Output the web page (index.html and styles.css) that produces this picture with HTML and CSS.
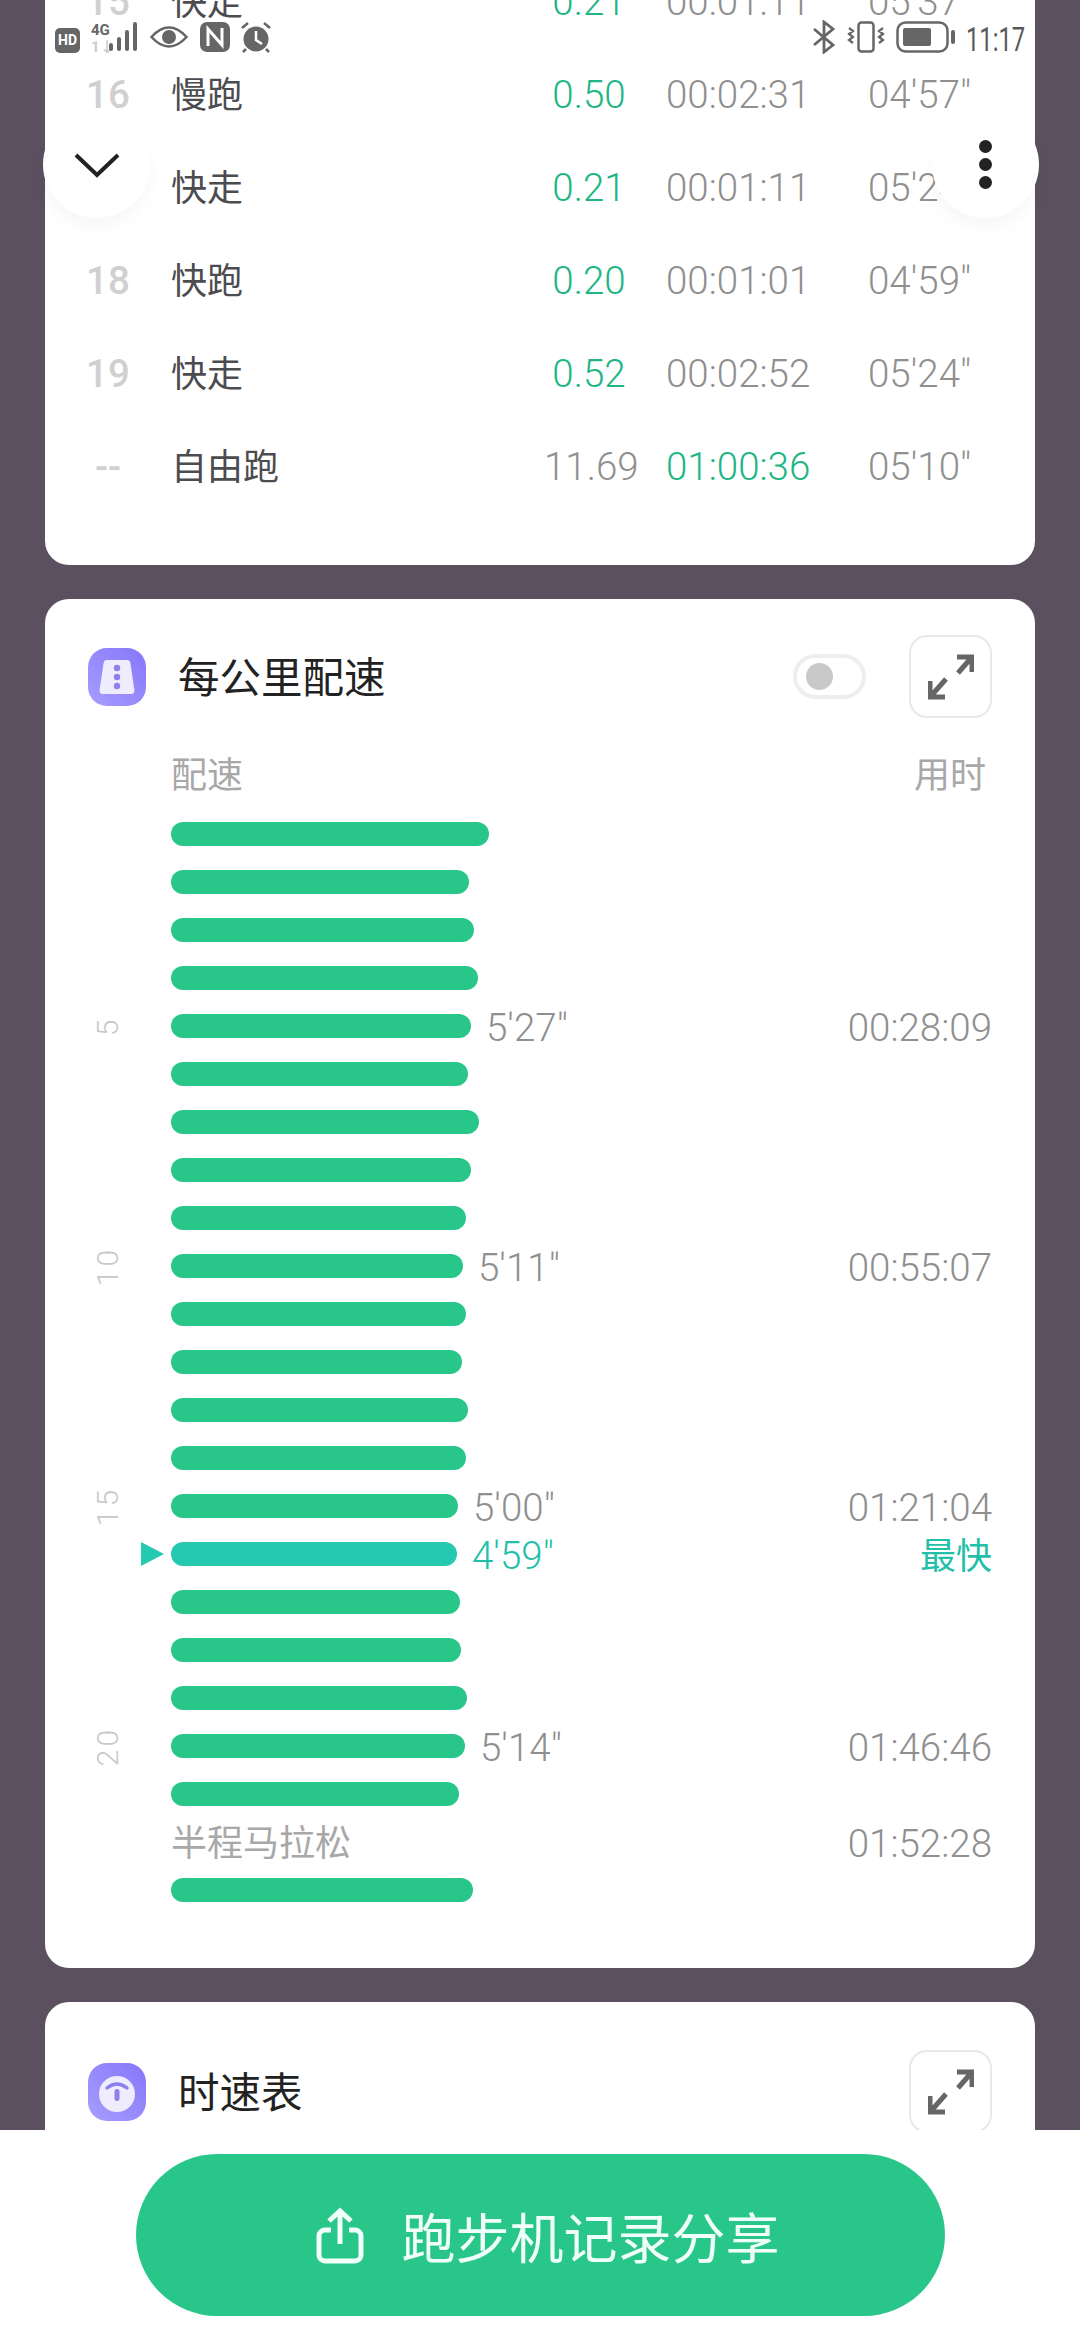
FILE: index.html
```html
<!DOCTYPE html>
<html lang="zh-CN">

<head>
    <meta charset="UTF-8">
    <meta name="viewport" content="width=device-width, initial-scale=1.0">
    <title>跑步机记录</title>

    <link rel="stylesheet" href="styles.css">
</head>

<body>
    <div class="page">
        <section class="card card-laps">
            <div class="lap"><span class="lap-no">15</span><span class="lap-name">快走</span><span class="lap-dist green">0.21</span><span class="lap-time">00:01:11</span><span class="lap-pace">05'37"</span></div>
            <div class="lap"><span class="lap-no">16</span><span class="lap-name">慢跑</span><span class="lap-dist green">0.50</span><span class="lap-time">00:02:31</span><span class="lap-pace">04'57"</span></div>
            <div class="lap"><span class="lap-no">17</span><span class="lap-name">快走</span><span class="lap-dist green">0.21</span><span class="lap-time">00:01:11</span><span class="lap-pace">05'24"</span></div>
            <div class="lap"><span class="lap-no">18</span><span class="lap-name">快跑</span><span class="lap-dist green">0.20</span><span class="lap-time">00:01:01</span><span class="lap-pace">04'59"</span></div>
            <div class="lap"><span class="lap-no">19</span><span class="lap-name">快走</span><span class="lap-dist green">0.52</span><span class="lap-time">00:02:52</span><span class="lap-pace">05'24"</span></div>
            <div class="lap"><span class="lap-no">--</span><span class="lap-name">自由跑</span><span class="lap-dist">11.69</span><span class="lap-time green">01:00:36</span><span class="lap-pace">05'10"</span></div>
        </section>

        <section class="card card-pace">
            <div class="card-head">
                <svg class="head-icon" viewBox="0 0 58 58">
                    <defs>
                        <linearGradient id="purple1" x1="0" y1="1" x2="1" y2="0">
                            <stop offset="0" stop-color="#a79dff" />
                            <stop offset="1" stop-color="#8577f8" />
                        </linearGradient>
                    </defs>
                    <rect width="58" height="58" rx="19" fill="url(#purple1)" />
                    <path d="M19 12h20q3 0 3.400 3l4 27q.4 4-3.400 4H15q-3.800 0-3.400-4l4-27q.4-3 3.400-3z" fill="#efecfd" />
                    <circle cx="29" cy="20" r="3.200" fill="#8d80ee" />
                    <circle cx="29" cy="29" r="3.200" fill="#8d80ee" />
                    <circle cx="29" cy="38" r="3.200" fill="#8d80ee" />
                </svg>
                <h2 class="card-title">每公里配速</h2>
                <div class="toggle"><span class="toggle-knob"></span></div>
                <button class="expand" type="button">
                    <svg viewBox="0 0 46 46" width="46" height="46">
                        <path d="M29 3h15v15M44 3L30 19M2 27v16h15M3 42l15-17" />
                    </svg>
                </button>
            </div>

            <div class="pace-labels"><span>配速</span><span>用时</span></div>

            <div class="pace-list">
                <div class="km"><span class="km-side"></span><span class="km-main"><i class="bar" style="width:318px"></i></span></div>
                <div class="km"><span class="km-side"></span><span class="km-main"><i class="bar" style="width:298px"></i></span></div>
                <div class="km"><span class="km-side"></span><span class="km-main"><i class="bar" style="width:303px"></i></span></div>
                <div class="km"><span class="km-side"></span><span class="km-main"><i class="bar" style="width:307px"></i></span></div>
                <div class="km"><span class="km-side"><b class="km-no">5</b></span><span class="km-main"><i class="bar" style="width:300px"></i><span class="km-pace">5'27"</span></span><span class="km-time">00:28:09</span></div>
                <div class="km"><span class="km-side"></span><span class="km-main"><i class="bar" style="width:297px"></i></span></div>
                <div class="km"><span class="km-side"></span><span class="km-main"><i class="bar" style="width:308px"></i></span></div>
                <div class="km"><span class="km-side"></span><span class="km-main"><i class="bar" style="width:300px"></i></span></div>
                <div class="km"><span class="km-side"></span><span class="km-main"><i class="bar" style="width:295px"></i></span></div>
                <div class="km"><span class="km-side"><b class="km-no">10</b></span><span class="km-main"><i class="bar" style="width:292px"></i><span class="km-pace">5'11"</span></span><span class="km-time">00:55:07</span></div>
                <div class="km"><span class="km-side"></span><span class="km-main"><i class="bar" style="width:295px"></i></span></div>
                <div class="km"><span class="km-side"></span><span class="km-main"><i class="bar" style="width:291px"></i></span></div>
                <div class="km"><span class="km-side"></span><span class="km-main"><i class="bar" style="width:297px"></i></span></div>
                <div class="km"><span class="km-side"></span><span class="km-main"><i class="bar" style="width:295px"></i></span></div>
                <div class="km"><span class="km-side"><b class="km-no">15</b></span><span class="km-main"><i class="bar" style="width:287px"></i><span class="km-pace">5'00"</span></span><span class="km-time">01:21:04</span></div>
                <div class="km km-fast"><span class="km-side"><i class="km-arrow"></i></span><span class="km-main"><i class="bar" style="width:286px"></i><span class="km-pace">4'59"</span></span><span class="km-time">最快</span></div>
                <div class="km"><span class="km-side"></span><span class="km-main"><i class="bar" style="width:289px"></i></span></div>
                <div class="km"><span class="km-side"></span><span class="km-main"><i class="bar" style="width:290px"></i></span></div>
                <div class="km"><span class="km-side"></span><span class="km-main"><i class="bar" style="width:296px"></i></span></div>
                <div class="km"><span class="km-side"><b class="km-no">20</b></span><span class="km-main"><i class="bar" style="width:294px"></i><span class="km-pace">5'14"</span></span><span class="km-time">01:46:46</span></div>
                <div class="km"><span class="km-side"></span><span class="km-main"><i class="bar" style="width:288px"></i></span></div>
                <div class="km"><span class="km-side"></span><span class="km-main km-half">半程马拉松</span><span class="km-time">01:52:28</span></div>
                <div class="km"><span class="km-side"></span><span class="km-main"><i class="bar" style="width:302px"></i></span></div>
            </div>
        </section>

        <section class="card card-speed">
            <div class="card-head">
                <svg class="head-icon" viewBox="0 0 58 58">
                    <defs>
                        <linearGradient id="purple2" x1="0" y1="1" x2="1" y2="0">
                            <stop offset="0" stop-color="#a79dff" />
                            <stop offset="1" stop-color="#8577f8" />
                        </linearGradient>
                    </defs>
                    <rect width="58" height="58" rx="19" fill="url(#purple2)" />
                    <circle cx="29" cy="31" r="18" fill="#efecfd" />
                    <path d="M19 25q10-8 20 0" fill="none" stroke="#8d80ee" stroke-width="3.500" stroke-linecap="round" />
                    <rect x="26.500" y="26" width="5" height="12" rx="2.500" fill="#8d80ee" />
                </svg>
                <h2 class="card-title">时速表</h2>
                <button class="expand" type="button">
                    <svg viewBox="0 0 46 46" width="46" height="46">
                        <path d="M29 3h15v15M44 3L30 19M2 27v16h15M3 42l15-17" />
                    </svg>
                </button>
            </div>
        </section>
    </div>

    <div class="statusbar">
        <div class="status-left">
            <span class="hd">HD</span>
            <svg width="50" height="32" viewBox="0 0 50 32">
                <text class="net" x="1" y="14">4G</text>
                <text class="net net-low" x="1" y="31">1↓</text>
                <rect x="19" y="22" width="4" height="8" rx="2" fill="#666" />
                <rect x="27" y="16" width="4" height="14" rx="2" fill="#666" />
                <rect x="35" y="9" width="4" height="21" rx="2" fill="#666" />
                <rect x="43" y="1" width="4" height="29" rx="2" fill="#666" />
            </svg>
            <svg width="38" height="22" viewBox="0 0 38 22">
                <path d="M1.500 11Q10 1.500 19 1.500T36.500 11Q28 20.500 19 20.500T1.500 11z" fill="none" stroke="#666" stroke-width="2.500" />
                <circle cx="19" cy="11" r="7" fill="#666" />
            </svg>
            <svg class="nfc" width="30" height="30" viewBox="0 0 30 30">
                <rect width="30" height="30" rx="7" fill="#666" />
                <path d="M8 24V7l14 16V6" fill="none" stroke="#fff" stroke-width="3" />
            </svg>
            <svg width="32" height="32" viewBox="0 0 32 32">
                <circle cx="16" cy="18" r="12.500" fill="#666" />
                <path d="M16 10v9l6 4" fill="none" stroke="#fff" stroke-width="2.500" />
                <path d="M2 7l6-5M30 7l-6-5M6 28l-3 3M26 28l3 3" fill="none" stroke="#666" stroke-width="2.500" />
            </svg>
        </div>
        <div class="status-right">
            <svg width="24" height="34" viewBox="0 0 24 34">
                <path d="M2 9l19 16-9 7V2l9 7L2 25" fill="none" stroke="#666" stroke-width="2.800" />
            </svg>
            <svg width="40" height="32" viewBox="0 0 40 32">
                <rect x="12.500" y="1.500" width="15" height="29" rx="3" fill="none" stroke="#666" stroke-width="2.500" />
                <path d="M3 7l4 3-4 3 4 3-4 3 4 3M37 7l-4 3 4 3-4 3 4 3-4 3" fill="none" stroke="#666" stroke-width="2.200" />
            </svg>
            <svg width="60" height="32" viewBox="0 0 60 32">
                <rect x="1.500" y="1.500" width="50" height="29" rx="8" fill="none" stroke="#666" stroke-width="2.500" />
                <rect x="7" y="7" width="28" height="18" rx="2" fill="#666" />
                <rect x="55" y="9" width="4" height="14" rx="2" fill="#666" />
            </svg>
            <span class="clock">11:17</span>
        </div>
    </div>

    <button class="round round-left" type="button">
        <svg viewBox="0 0 46 26" width="46" height="26">
            <path d="M2 3l21 20L44 3" fill="none" stroke="#222" stroke-width="4" />
        </svg>
    </button>
    <button class="round round-right" type="button">
        <span class="dot"></span><span class="dot"></span><span class="dot"></span>
    </button>

    <div class="bottom">
        <button class="share" type="button">
            <svg viewBox="0 0 48 57" width="48" height="57">
                <path d="M15 23H9a6 6 0 0 0-6 6v19a6 6 0 0 0 6 6h30a6 6 0 0 0 6-6V29a6 6 0 0 0-6-6h-6M24 4v33M13 14L24 4l11 10" fill="none" stroke="#f0fff9" stroke-width="5" />
            </svg>
            <span>跑步机记录分享</span>
        </button>
    </div>
</body>

</html>
```

FILE: styles.css
```css
* {
    box-sizing: border-box;
}

html,
body {
    margin: 0;
    height: 2340px;
    overflow: hidden;
}

body {
    position: relative;
    background-color: #5a5060;
    font-family: "Roboto", "Noto Sans CJK SC", sans-serif;
    font-weight: 300;
    color: #8f8f8f;
}

.page {
    padding: 0 45px;
    display: flex;
    flex-direction: column;
    gap: 34px;
}

.card {
    background-color: #fff;
    border-radius: 24px;
}

.green {
    color: #20b683;
}

/* laps */
.card-laps {
    margin-top: -45px;
    padding-bottom: 52px;
}

.lap {
    display: grid;
    grid-template-columns: 126px 373px 90px 234px 167px;
    align-items: center;
    height: 93px;
    font-size: 38.500px;
}

.lap-no {
    text-align: center;
    font-weight: 500;
    color: #d0d0d0;
}

.lap-name {
    padding-bottom: 6px;
    font-size: 36px;
    font-weight: 400;
    color: #4c4c50;
}

.lap-dist {
    text-align: center;
}

.lap-time {
    padding-left: 32px;
}

/* card header */
.card-pace {
    padding: 36px 0 54px;
}

.card-speed {
    padding: 48px 0 40px;
}

.card-head {
    display: flex;
    align-items: center;
    height: 83px;
    padding: 0 43px;
}

.head-icon {
    width: 58px;
    height: 58px;
    flex: none;
}

.card-title {
    flex: 1;
    margin: 0 0 0 32px;
    padding-bottom: 4px;
    font-size: 41.500px;
    font-weight: 400;
    color: #222;
}

.toggle {
    width: 73px;
    height: 45px;
    margin-right: 43px;
    padding: 0 9px;
    display: flex;
    align-items: center;
    border: 4px solid #eee;
    border-radius: 23px;
}

.toggle-knob {
    width: 27px;
    height: 27px;
    border-radius: 50%;
    background-color: #c9c9c9;
}

.expand {
    width: 83px;
    height: 83px;
    padding: 0;
    display: flex;
    align-items: center;
    justify-content: center;
    background-color: #fff;
    border: 2px solid #e8e8e8;
    border-radius: 18px;
}

.expand path {
    fill: none;
    stroke: #666;
    stroke-width: 5;
}

/* pace chart */
.pace-labels {
    display: flex;
    justify-content: space-between;
    margin-top: 34px;
    padding: 0 49px 0 126px;
    line-height: 48px;
    font-size: 36px;
    font-weight: 400;
    color: #a8a8a8;
}

.pace-list {
    margin-top: 10px;
    padding-right: 43px;
}

.km {
    display: grid;
    grid-template-columns: 126px 1fr auto;
    grid-template-rows: 48px;
    align-items: center;
    height: 48px;
}

.km-side {
    display: flex;
    align-items: center;
    justify-content: center;
    height: 48px;
}

.km-no {
    display: block;
    transform: rotate(-90deg);
    font-size: 30px;
    font-weight: 300;
    letter-spacing: 3px;
    color: #c8c8c8;
}

.km-main {
    display: flex;
    align-items: center;
    gap: 15px;
}

.bar {
    display: block;
    height: 24px;
    border-radius: 12px;
    background-color: #29c68a;
}

.km-pace,
.km-time {
    padding-top: 3px;
    font-size: 38.500px;
    line-height: 40px;
}

.km-half {
    padding-top: 4px;
    font-size: 36px;
    font-weight: 400;
    line-height: 40px;
    color: #a8a8a8;
}

.km-fast .bar {
    background-color: #25c9b0;
}

.km-fast .km-pace,
.km-fast .km-time {
    color: #22bfa9;
}

.km-fast .km-time {
    padding-top: 6px;
    font-size: 36px;
    font-weight: 400;
}

.km-arrow {
    display: block;
    margin-left: 96px;
    margin-right: auto;
    border-left: 23px solid #25c9b0;
    border-top: 12px solid transparent;
    border-bottom: 12px solid transparent;
}

.km-side:has(.km-arrow) {
    justify-content: flex-start;
}

/* overlays */
.statusbar {
    position: absolute;
    top: 20px;
    left: 55px;
    right: 58px;
    display: flex;
    justify-content: space-between;
    align-items: center;
    height: 34px;
}

.status-left,
.status-right {
    display: flex;
    align-items: center;
    gap: 10px;
}

.nfc {
    margin-left: 2px;
}

.hd {
    width: 25px;
    height: 25px;
    margin-top: 6px;
    border-radius: 5px;
    background-color: #666;
    color: #fff;
    font-size: 14px;
    font-weight: 700;
    line-height: 25px;
    text-align: center;
}

.net {
    font-size: 15px;
    font-weight: 700;
    fill: #666;
}

.net-low {
    fill: #ccc;
}

.clock {
    width: 56px;
    margin-top: 4px;
    transform: scaleX(0.72);
    transform-origin: left center;
    white-space: nowrap;
    font-size: 33px;
    font-weight: 400;
    color: #5a5a5a;
}

.round {
    position: absolute;
    top: 111px;
    width: 107px;
    height: 107px;
    padding: 0;
    display: flex;
    flex-direction: column;
    align-items: center;
    justify-content: center;
    gap: 5px;
    background-color: #fff;
    border: none;
    border-radius: 50%;
    box-shadow: 0 10px 16px rgba(0, 0, 0, 0.03);
}

.round-left {
    left: 43px;
}

.round-right {
    left: 932px;
}

.dot {
    width: 13px;
    height: 13px;
    border-radius: 50%;
    background-color: #222;
}

.bottom {
    position: absolute;
    left: 0;
    right: 0;
    top: 2130px;
    height: 210px;
    padding-top: 24px;
    display: flex;
    justify-content: center;
    background-color: #fff;
}

.share {
    width: 809px;
    height: 162px;
    padding: 0 0 0 15px;
    display: flex;
    align-items: center;
    justify-content: center;
    gap: 38px;
    background-color: #29c68a;
    border: none;
    border-radius: 81px;
    color: #f0fff9;
    font-family: "Noto Sans CJK SC", sans-serif;
    font-size: 54px;
    font-weight: 400;
}
```
